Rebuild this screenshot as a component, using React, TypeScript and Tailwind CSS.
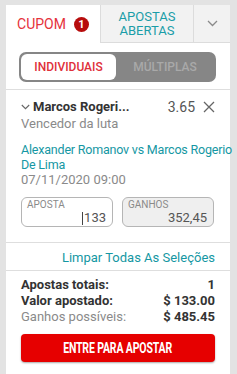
import React from "react";

export default function App() {
  const teal = "text-[#1597a3]";
  return (
    <div className="w-[237px] h-[374px] bg-[#e3e3e3] pl-[6px] pr-[7px] pt-[5px] overflow-hidden" style={{ fontFamily: "Roboto, 'Liberation Sans', sans-serif" }}>
      <div className="bg-white h-full flex flex-col">
        {/* Tabs */}
        <div className="flex h-[38px] shrink-0">
          <div className="w-[94px] flex items-center justify-center gap-[8px]">
            <span className="text-[14px] text-[#e5323b] leading-none">CUPOM</span>
            <span className="w-[15px] h-[15px] rounded-full bg-[#b70d0d] text-white text-[11px] font-bold flex items-center justify-center leading-none">1</span>
          </div>
          <div className="w-[93px] bg-[#f2f2f2] border-l border-b border-[#dcdcdc] flex flex-col items-center justify-center text-[13px] leading-[14px] text-[#1a9da8]">
            <span>APOSTAS</span>
            <span>ABERTAS</span>
          </div>
          <div className="flex-1 bg-[#f2f2f2] border-l border-b border-[#dcdcdc] flex items-center justify-center">
            <svg width="11" height="7" viewBox="0 0 11 7" fill="none" stroke="#8a8a8a" strokeWidth="1.3">
              <path d="M1 1l4.5 4.5L10 1" />
            </svg>
          </div>
        </div>

        {/* Toggle */}
        <div className="pt-[9px] pb-[7px] pl-[13px] pr-[14px] border-b border-[#dedede]">
          <div className="h-[30px] rounded-[7px] bg-[#868686] p-[2px] flex">
            <div className="w-[95px] h-[26px] bg-white rounded-[6px] flex items-center justify-center text-[12px] font-medium text-[#e0303a]">INDIVIDUAIS</div>
            <div className="flex-1 flex items-center justify-center text-[12px] font-medium text-[#a9a9a9]">MÚLTIPLAS</div>
          </div>
        </div>

        {/* Bet */}
        <div className="px-[15px] pt-[8px] pb-[15px] border-b border-[#dedede]">
          <div className="flex items-center h-[18px]">
            <svg width="9" height="6" viewBox="0 0 9 6" fill="none" stroke="#666" strokeWidth="1.1" className="mr-[3px]">
              <path d="M0.8 1l3.7 3.7L8.2 1" />
            </svg>
            <span className="text-[13px] font-bold text-[#333] leading-[18px]">Marcos Rogeri...</span>
            <span className="ml-auto text-[14px] text-[#555] leading-[18px]">3.65</span>
            <svg width="12" height="12" viewBox="0 0 12 12" fill="none" stroke="#666" strokeWidth="1.3" className="ml-[8px]">
              <path d="M1 1l10 10M11 1L1 11" />
            </svg>
          </div>
          <div className="text-[13px] leading-[16px] text-[#8a8a8a]">Vencedor da luta</div>
          <div className={`mt-[10px] text-[12.5px] leading-[15px] tracking-[-0.2px] ${teal}`}>
            <div className="whitespace-nowrap">Alexander Romanov vs Marcos Rogerio</div>
            <div>De Lima</div>
          </div>
          <div className="text-[13px] leading-[15px] text-[#8a8a8a]">07/11/2020 09:00</div>
          <div className="mt-[10px] flex gap-[9px]">
            <div className="w-[92px] h-[30px] rounded-[6px] border border-[#b5b5b5] flex flex-col px-[5px] pt-[1px]">
              <span className="text-[10px] leading-[12px] text-[#8a8a8a]">APOSTA</span>
              <span className="self-end flex items-center text-[13px] leading-[14px] text-[#555] pr-[1px]">
                <span className="inline-block w-[1px] h-[13px] bg-[#444] mr-[1px]" />133
              </span>
            </div>
            <div className="w-[92px] h-[30px] rounded-[6px] border border-[#b5b5b5] bg-[#efefef] flex flex-col px-[5px] pt-[1px]">
              <span className="text-[10px] leading-[12px] text-[#8a8a8a]">GANHOS</span>
              <span className="self-end text-[13px] leading-[14px] text-[#555] pr-[1px]">352,45</span>
            </div>
          </div>
        </div>

        {/* Clear */}
        <div className="px-[15px] pt-[7px] pb-[4px] border-b border-[#dedede] flex justify-end">
          <span className={`text-[13px] leading-[16px] ${teal}`}>Limpar Todas As Seleções</span>
        </div>

        {/* Summary */}
        <div className="px-[15px] pt-[6px]">
          <div className="flex justify-between text-[13px] leading-[16px] font-bold text-[#333]">
            <span>Apostas totais:</span><span>1</span>
          </div>
          <div className="flex justify-between text-[13px] leading-[16px] font-bold text-[#333]">
            <span>Valor apostado:</span><span>$ 133.00</span>
          </div>
          <div className="flex justify-between text-[13px] leading-[16px] text-[#333]">
            <span className="text-[#8a8a8a]">Ganhos possíveis:</span><span className="font-bold">$ 485.45</span>
          </div>
          <div className="mt-[9px] h-[28px] rounded-[4px] bg-[#e60000] shadow-[0_1px_2px_rgba(0,0,0,0.35)] flex items-center justify-center">
            <span className="inline-block text-white text-[14px] font-bold tracking-[-0.2px] scale-x-75">ENTRE PARA APOSTAR</span>
          </div>
        </div>
      </div>
    </div>
  );
}
